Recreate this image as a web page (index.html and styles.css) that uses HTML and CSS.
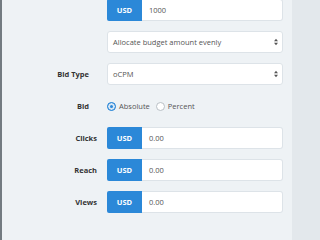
FILE: index.html
```html
<!DOCTYPE html>
<html lang="en">
<head>
<meta charset="utf-8">
<title>Budget form</title>
<link rel="stylesheet" href="styles.css">
</head>
<body>
<div class="page">
  <div class="panel">
    <div class="form">
      <div class="row">
        <span class="label"></span>
        <div class="control">
          <span class="addon">USD</span>
          <span class="input">1000</span>
        </div>
      </div>
      <div class="row">
        <span class="label"></span>
        <div class="control select">
          <span class="select-text">Allocate budget amount evenly</span>
          <svg class="caret" width="4" height="8" viewBox="0 0 4 8"><path d="M0 3.3 L2 0.8 L4 3.3 Z M0 4.7 L4 4.7 L2 7.2 Z" fill="#555"/></svg>
        </div>
      </div>
      <div class="row">
        <span class="label narrow">Bid Type</span>
        <div class="control select">
          <span class="select-text">oCPM</span>
          <svg class="caret" width="4" height="8" viewBox="0 0 4 8"><path d="M0 3.3 L2 0.8 L4 3.3 Z M0 4.7 L4 4.7 L2 7.2 Z" fill="#555"/></svg>
        </div>
      </div>
      <div class="row">
        <span class="label narrow">Bid</span>
        <div class="control radios">
          <label class="option"><span class="radio checked"></span><span>Absolute</span></label>
          <label class="option"><span class="radio"></span><span>Percent</span></label>
        </div>
      </div>
      <div class="row">
        <span class="label">Clicks</span>
        <div class="control">
          <span class="addon">USD</span>
          <span class="input">0.00</span>
        </div>
      </div>
      <div class="row">
        <span class="label">Reach</span>
        <div class="control">
          <span class="addon">USD</span>
          <span class="input">0.00</span>
        </div>
      </div>
      <div class="row">
        <span class="label">Views</span>
        <div class="control">
          <span class="addon">USD</span>
          <span class="input">0.00</span>
        </div>
      </div>
    </div>
  </div>
</div>
</body>
</html>
```

FILE: styles.css
```css
html, body {
  margin: 0;
  padding: 0;
}

body {
  font-family: "Open Sans", "Liberation Sans", sans-serif;
  background: #e3e8ec;
  color: #555;
}

.page {
  display: flex;
  height: 100vh;
  overflow: hidden;
}

.panel {
  width: 290px;
  background: #eef2f5;
  border-left: 2px solid #737b81;
  overflow: hidden;
}

.form {
  display: flex;
  flex-direction: column;
  gap: 10px;
  margin-top: -1px;
}

.row {
  display: flex;
  align-items: center;
  gap: 10px;
  height: 22px;
}

.label {
  flex: none;
  width: 95px;
  box-sizing: border-box;
  text-align: right;
  font-size: 7.5px;
  font-weight: 700;
  color: #333;
}

.label.narrow {
  padding-right: 8px;
}

.control {
  flex: none;
  width: 176px;
  height: 22px;
  display: flex;
  box-sizing: border-box;
}

.addon {
  flex: none;
  width: 35px;
  display: flex;
  align-items: center;
  justify-content: center;
  background: #2b88d8;
  color: #fff;
  font-size: 7.5px;
  font-weight: 700;
  border-radius: 2px 0 0 2px;
}

.input {
  flex: 1;
  display: flex;
  align-items: center;
  padding: 0 7px;
  background: #fff;
  border: 1px solid #dde3e8;
  border-left: none;
  border-radius: 0 3px 3px 0;
  font-size: 7.5px;
  color: #555;
}

.select {
  align-items: center;
  justify-content: space-between;
  padding: 0 4px 0 5px;
  background: #fff;
  border: 1px solid #dde3e8;
  border-radius: 3px;
}

.select-text {
  font-size: 7.5px;
  color: #555;
}

.caret {
  display: block;
}

.radios {
  align-items: center;
  gap: 6px;
}

.option {
  display: flex;
  align-items: center;
  gap: 3px;
  font-size: 7.5px;
  color: #555;
}

.radio {
  width: 9px;
  height: 9px;
  box-sizing: border-box;
  border: 1px solid #b9c0c6;
  border-radius: 50%;
  background: #fff;
}

.radio.checked {
  border-color: #2b88d8;
  background: #2b88d8;
  box-shadow: inset 0 0 0 2px #d8e7f5;
}
```
